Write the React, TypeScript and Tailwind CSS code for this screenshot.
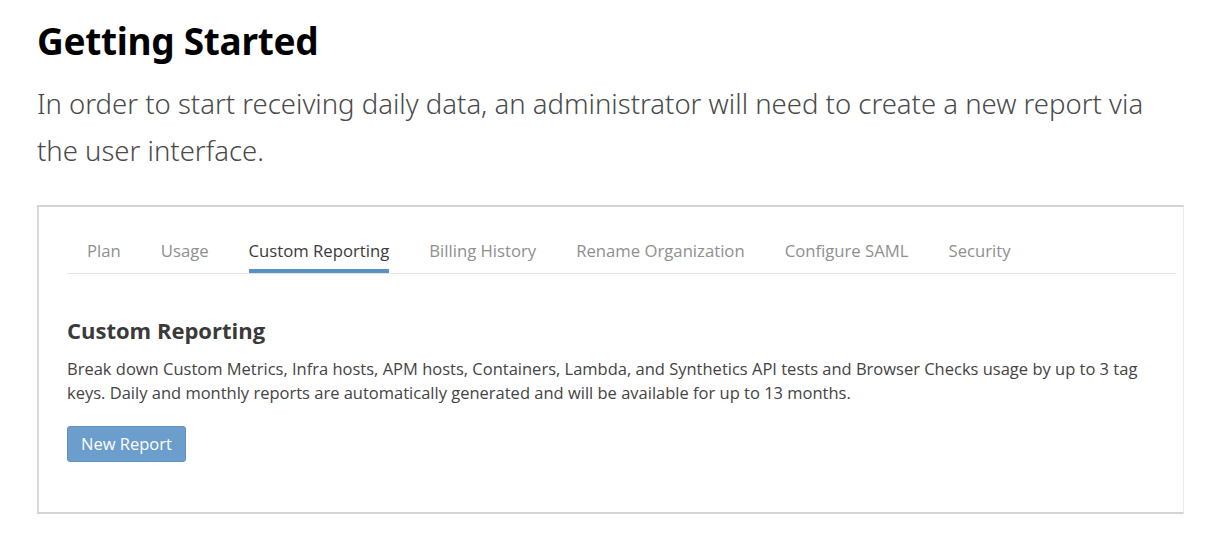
import React from 'react';

const tabs = ['Plan', 'Usage', 'Custom Reporting', 'Billing History', 'Rename Organization', 'Configure SAML', 'Security'];

const App: React.FC = () => {
  return (
    <div className="w-[1218px] h-[552px] bg-white pl-[37px] pt-[18px]" style={{ fontFamily: '"Noto Sans", sans-serif' }}>
      <h1 className="text-[37px] leading-[46px] font-bold text-black tracking-[-0.3px]">Getting Started</h1>
      <p className="mt-[16px] text-[27.5px] leading-[47px] font-light text-[#4a4a4a] w-[1130px]">
        In order to start receiving daily data, an administrator will need to create a new report via the user interface.
      </p>

      {/* screenshot of the app */}
      <div
        className="mt-[31px] w-[1147px] h-[309px] border-t-2 border-l-2 border-b-2 border-r border-t-[#d4d4d4] border-l-[#d8d8d8] border-b-[#d4d4d4] border-r-[#ececec] pl-[28px] pr-[7px]"
        style={{ fontFamily: '"Open Sans", sans-serif' }}
      >
        <ul className="mt-[33px] flex pl-[20px] border-b border-[#e4e4e4] text-[16.7px]">
          {tabs.map(tab => {
            const active = tab === 'Custom Reporting';
            return (
              <li
                key={tab}
                className={
                  active
                    ? 'mx-[20px] first:ml-0 pt-0 pb-[7px] text-[#3a3a3a] border-b-4 border-[#5b90c4] leading-[22px]'
                    : 'mx-[20px] first:ml-0 pt-0 pb-[11px] text-[#8f8f8f] leading-[22px]'
                }
              >
                {tab}
              </li>
            );
          })}
        </ul>

        <h2 className="mt-[41px] text-[22px] leading-[30px] font-bold text-[#3a3a3a]">Custom Reporting</h2>
        <p className="mt-[12px] text-[16.5px] leading-[24px] text-[#444] pr-[30px]">
          Break down Custom Metrics, Infra hosts, APM hosts, Containers, Lambda, and Synthetics API tests and Browser Checks usage by up to 3 tag keys. Daily and monthly reports are automatically generated and will be available for up to 13 months.
        </p>
        <button className="mt-[21px] w-[119px] h-[36px] rounded-[3px] bg-[#6b9dcd] border border-[#5f92c3] text-white text-[16.5px] leading-none">
          New Report
        </button>
      </div>
    </div>
  );
};

export default App;
